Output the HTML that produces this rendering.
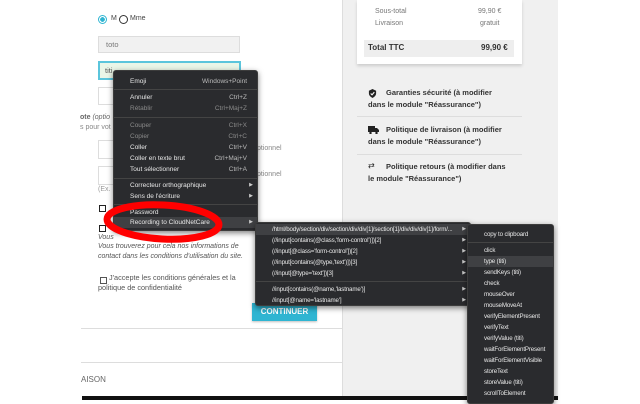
<!DOCTYPE html>
<html><head><meta charset="utf-8"><style>
*{margin:0;padding:0;box-sizing:border-box}
body{width:640px;height:400px;overflow:hidden;background:#fff;font-family:"Liberation Sans",sans-serif;position:relative;color:#555}
.a{position:absolute;white-space:nowrap}
.inp{position:absolute;background:#f1f1f1;border:1px solid #ddd}
.t7{font-size:7px}
.menu{position:absolute;background:#2a2b2e;border:1px solid #3c3c3c;border-radius:3px;box-shadow:0 2px 6px rgba(0,0,0,.5)}
.mi{position:absolute;left:0;right:0;height:11px;font-size:6.5px;color:#e8e8e8;line-height:11px}
.mi .l{position:absolute;left:16px}
.mi .r{position:absolute;right:10px;color:#bbb}
.dis{color:#8a8a8a!important}
.sep{position:absolute;left:0;right:0;height:1px;background:#444}
.arr{position:absolute;right:4px;color:#ccc;font-size:5px}
.cb{position:absolute;width:7px;height:7px;border:1px solid #222;background:#fff}
.line{position:absolute;height:1px;background:#ddd}
.sm .mi{font-size:6.2px;letter-spacing:-0.15px}
</style></head><body>
<div class="a" style="left:343px;top:0;width:215px;height:400px;background:#f0f0f0"></div>
<div class="a" style="left:342px;top:0;width:1px;height:400px;background:#ddd"></div>
<!-- summary -->
<div class="a" style="left:357px;top:0;width:165px;height:64px;background:#fff;box-shadow:0 2px 3px rgba(0,0,0,.15)"></div>
<div class="a t7" style="left:375px;top:8px;color:#777">Sous-total</div>
<div class="a t7" style="left:478px;top:8px;color:#777">99,90 €</div>
<div class="a t7" style="left:375px;top:20px;color:#777">Livraison</div>
<div class="a t7" style="left:480px;top:20px;color:#777">gratuit</div>
<div class="a" style="left:364px;top:40px;width:150px;height:17px;background:#eee"></div>
<div class="a" style="left:368px;top:43px;font-size:8px;font-weight:bold;color:#333">Total TTC</div>
<div class="a" style="left:481px;top:43px;font-size:8px;font-weight:bold;color:#333">99,90 €</div>
<!-- reassurance -->
<svg class="a" style="left:368px;top:89px" width="9" height="9" viewBox="0 0 10 10"><path d="M5 0L9 2V5C9 8 5 10 5 10S1 8 1 5V2Z" fill="#222"/><path d="M3 5L4.5 6.5L7 3.5" stroke="#fff" stroke-width="1.2" fill="none"/></svg>
<div class="a" style="left:386px;top:88px;font-size:7.5px;font-weight:bold;color:#333">Garanties sécurité (à modifier</div>
<div class="a" style="left:368px;top:100px;font-size:7.5px;font-weight:bold;color:#333">dans le module "Réassurance")</div>
<div class="line" style="left:357px;top:116px;width:165px"></div>
<svg class="a" style="left:368px;top:126px" width="11" height="8" viewBox="0 0 11 8"><rect x="0" y="0" width="7" height="6" fill="#222"/><path d="M7 2H9L11 4V6H7Z" fill="#222"/><circle cx="2.5" cy="7" r="1.2" fill="#222"/><circle cx="8.5" cy="7" r="1.2" fill="#222"/></svg>
<div class="a" style="left:386px;top:125px;font-size:7.5px;font-weight:bold;color:#333">Politique de livraison (à modifier</div>
<div class="a" style="left:368px;top:137px;font-size:7.5px;font-weight:bold;color:#333">dans le module "Réassurance")</div>
<div class="line" style="left:357px;top:154px;width:165px"></div>
<div class="a" style="left:368px;top:161px;font-size:8px;color:#222">⇄</div>
<div class="a" style="left:386px;top:162px;font-size:7.5px;font-weight:bold;color:#333">Politique retours (à modifier dans</div>
<div class="a" style="left:368px;top:174px;font-size:7.5px;font-weight:bold;color:#333">le module "Réassurance")</div>
<!-- form -->
<div class="a" style="left:98px;top:15px;width:9px;height:9px;border-radius:50%;border:1px solid #2fb5d2;background:radial-gradient(#2fb5d2 45%,#fff 50%)"></div>
<div class="a t7" style="left:111px;top:15px;color:#444">M</div>
<div class="a" style="left:119px;top:15px;width:9px;height:9px;border-radius:50%;border:1px solid #333;background:#fff"></div>
<div class="a t7" style="left:130px;top:15px;color:#444">Mme</div>
<div class="inp" style="left:98px;top:36px;width:142px;height:17px"></div>
<div class="a" style="left:106px;top:40px;font-size:7.5px;color:#777">toto</div>
<div class="inp" style="left:98px;top:61px;width:143px;height:19px;border:2px solid #5bc5dc;background:#eaf6e8"></div>
<div class="a" style="left:105px;top:66px;font-size:7.5px;color:#555">titi</div>
<div class="inp" style="left:98px;top:87px;width:20px;height:18px;background:#fff"></div>
<div class="a t7" style="left:80px;top:114px;color:#666"><b>ote</b> <i>(optio</i></div>
<div class="a t7" style="left:80px;top:124px;color:#888">s pour vot</div>
<div class="inp" style="left:98px;top:140px;width:20px;height:19px;background:#fff"></div>
<div class="a t7" style="left:257px;top:145px;color:#888">ptionnel</div>
<div class="inp" style="left:98px;top:166px;width:20px;height:19px;background:#fff"></div>
<div class="a t7" style="left:257px;top:171px;color:#888">ptionnel</div>
<div class="a t7" style="left:98px;top:186px;color:#999">(Ex.</div>
<div class="cb" style="left:99px;top:205px"></div>
<div class="cb" style="left:99px;top:225px"></div>
<div class="a t7" style="left:98px;top:234px;color:#555;font-style:italic">Vous</div>
<div class="a t7" style="left:98px;top:243px;color:#555;font-style:italic">Vous trouverez pour cela nos informations de</div>
<div class="a t7" style="left:98px;top:253px;color:#555;font-style:italic">contact dans les conditions d'utilisation du site.</div>
<div class="cb" style="left:100px;top:277px;border-color:#555"></div>
<div class="a" style="left:109px;top:273px;font-size:7.3px;color:#555">J'accepte les conditions générales et la</div>
<div class="a" style="left:98px;top:283px;font-size:7.3px;color:#555">politique de confidentialité</div>
<div class="a" style="left:252px;top:303px;width:65px;height:18px;background:#2fb5d2;box-shadow:0 1px 2px rgba(0,0,0,.25);color:#fff;font-weight:bold;font-size:8px;text-align:center;line-height:18px">CONTINUER</div>
<div class="line" style="left:81px;top:328px;width:261px"></div>
<div class="line" style="left:81px;top:362px;width:261px"></div>
<div class="a" style="left:81px;top:375px;font-size:8px;color:#666">AISON</div>
<div class="a" style="left:82px;top:396px;width:476px;height:4px;background:#111"></div>
<!-- context menu -->
<div class="menu" style="left:113px;top:70px;width:145px;height:161px">
<div class="mi" style="top:5px"><span class="l">Emoji</span><span class="r">Windows+Point</span></div>
<div class="sep" style="top:18px"></div>
<div class="mi" style="top:21px"><span class="l">Annuler</span><span class="r">Ctrl+Z</span></div>
<div class="mi dis" style="top:32px"><span class="l dis">Rétablir</span><span class="r dis">Ctrl+Maj+Z</span></div>
<div class="sep" style="top:46px"></div>
<div class="mi" style="top:49px"><span class="l dis">Couper</span><span class="r dis">Ctrl+X</span></div>
<div class="mi" style="top:60px"><span class="l dis">Copier</span><span class="r dis">Ctrl+C</span></div>
<div class="mi" style="top:71px"><span class="l">Coller</span><span class="r">Ctrl+V</span></div>
<div class="mi" style="top:82px"><span class="l">Coller en texte brut</span><span class="r">Ctrl+Maj+V</span></div>
<div class="mi" style="top:93px"><span class="l">Tout sélectionner</span><span class="r">Ctrl+A</span></div>
<div class="sep" style="top:107px"></div>
<div class="mi" style="top:109px"><span class="l">Correcteur orthographique</span><span class="arr">▶</span></div>
<div class="mi" style="top:120px"><span class="l">Sens de l'écriture</span><span class="arr">▶</span></div>
<div class="sep" style="top:133px"></div>
<div class="mi" style="top:136px"><span class="l">Password</span></div>
<div class="mi" style="top:146px;background:#3f4043"><span class="l">Recording to CloudNetCare</span><span class="arr">▶</span></div>
</div>
<div class="menu sm" style="left:255px;top:222px;width:216px;height:84px">
<div class="mi" style="top:1px;background:#3f4043"><span class="l">/html/body/section/div/section/div/div[1]/section[1]/div/div/div[1]/form/...</span><span class="arr">▶</span></div>
<div class="mi" style="top:12px"><span class="l">(//input[contains(@class,'form-control')])[2]</span><span class="arr">▶</span></div>
<div class="mi" style="top:23px"><span class="l">(//input[@class='form-control'])[2]</span><span class="arr">▶</span></div>
<div class="mi" style="top:34px"><span class="l">(//input[contains(@type,'text')])[3]</span><span class="arr">▶</span></div>
<div class="mi" style="top:45px"><span class="l">(//input[@type='text'])[3]</span><span class="arr">▶</span></div>
<div class="sep" style="top:58px"></div>
<div class="mi" style="top:61px"><span class="l">//input[contains(@name,'lastname')]</span><span class="arr">▶</span></div>
<div class="mi" style="top:72px"><span class="l">//input[@name='lastname']</span><span class="arr">▶</span></div>
</div>
<div class="menu sm" style="left:467px;top:224px;width:87px;height:180px">
<div class="mi" style="top:4px"><span class="l">copy to clipboard</span></div>
<div class="sep" style="top:17px"></div>
<div class="mi" style="top:20px"><span class="l">click</span></div>
<div class="mi" style="top:31px;background:#3f4043"><span class="l">type (titi)</span></div>
<div class="mi" style="top:42px"><span class="l">sendKeys (titi)</span></div>
<div class="mi" style="top:53px"><span class="l">check</span></div>
<div class="mi" style="top:64px"><span class="l">mouseOver</span></div>
<div class="mi" style="top:75px"><span class="l">mouseMoveAt</span></div>
<div class="mi" style="top:86px"><span class="l">verifyElementPresent</span></div>
<div class="mi" style="top:97px"><span class="l">verifyText</span></div>
<div class="mi" style="top:108px"><span class="l">verifyValue (titi)</span></div>
<div class="mi" style="top:119px"><span class="l">waitForElementPresent</span></div>
<div class="mi" style="top:130px"><span class="l">waitForElementVisible</span></div>
<div class="mi" style="top:141px"><span class="l">storeText</span></div>
<div class="mi" style="top:152px"><span class="l">storeValue (titi)</span></div>
<div class="mi" style="top:163px"><span class="l">scrollToElement</span></div>
</div>
<svg class="a" style="left:100px;top:198px" width="130" height="50"><ellipse cx="63" cy="24" rx="56" ry="17" transform="rotate(3 63 24)" fill="none" stroke="#f00" stroke-width="7"/></svg>
</body></html>
